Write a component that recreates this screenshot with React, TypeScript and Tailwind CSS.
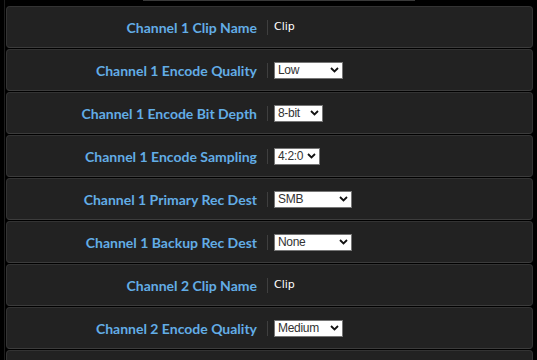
import React from 'react';

type Row = { label: string; kind: 'text' | 'select'; value: string; width?: number };

const rows: Row[] = [
  { label: 'Channel 1 Clip Name', kind: 'text', value: 'Clip' },
  { label: 'Channel 1 Encode Quality', kind: 'select', value: 'Low', width: 69 },
  { label: 'Channel 1 Encode Bit Depth', kind: 'select', value: '8-bit', width: 49 },
  { label: 'Channel 1 Encode Sampling', kind: 'select', value: '4:2:0', width: 46 },
  { label: 'Channel 1 Primary Rec Dest', kind: 'select', value: 'SMB', width: 78 },
  { label: 'Channel 1 Backup Rec Dest', kind: 'select', value: 'None', width: 78 },
  { label: 'Channel 2 Clip Name', kind: 'text', value: 'Clip' },
  { label: 'Channel 2 Encode Quality', kind: 'select', value: 'Medium', width: 69 },
  { label: 'Channel 2 Encode Bit Depth', kind: 'select', value: '8-bit', width: 49 },
];

function Chevron() {
  return (
    <svg width="9" height="6" viewBox="0 0 9 6" className="shrink-0 ml-[2px]">
      <path d="M1 1l3.5 3.5L8 1" fill="none" stroke="#111" strokeWidth="1.8" />
    </svg>
  );
}

function FakeSelect({ value, width }: { value: string; width: number }) {
  return (
    <div
      className="flex items-center justify-between bg-white border border-[#767676] h-[17px] pl-[3px] pr-[3px] text-[12px] text-[#333] leading-none"
      style={{ width }}
    >
      <span className="font-['Liberation_Sans',Arial,sans-serif] tracking-[-0.3px]">{value}</span>
      <Chevron />
    </div>
  );
}

export default function App() {
  return (
    <div className="w-[537px] h-[360px] bg-black overflow-hidden relative">
      <div className="absolute left-[143px] top-0 w-[272px] h-px bg-[#3a3a3a]" />
      <div className="absolute left-[4px] top-0 w-px h-full bg-[#1e1e1e]" />
      <div className="flex flex-col gap-[1px] pt-[6px] pl-[6px] pr-[4px]">
        {rows.map((r, i) => (
          <div
            key={i}
            className="flex items-center h-[42px] bg-[#222222] border border-[#333333] border-b-[#3c3c3c] rounded-[4px]"
          >
            <div className="w-[260px] pr-[10px] text-right font-['Lato',sans-serif] font-bold text-[14px] text-[#62ade6]">
              {r.label}
            </div>
            <div className="w-px h-[15px] bg-[#3f3f3f]" />
            <div className="pl-[6px] flex items-center">
              {r.kind === 'text' ? (
                <span className="font-['DejaVu_Sans',Verdana,sans-serif] text-[11px] text-white">{r.value}</span>
              ) : (
                <FakeSelect value={r.value} width={r.width ?? 69} />
              )}
            </div>
          </div>
        ))}
      </div>
    </div>
  );
}
